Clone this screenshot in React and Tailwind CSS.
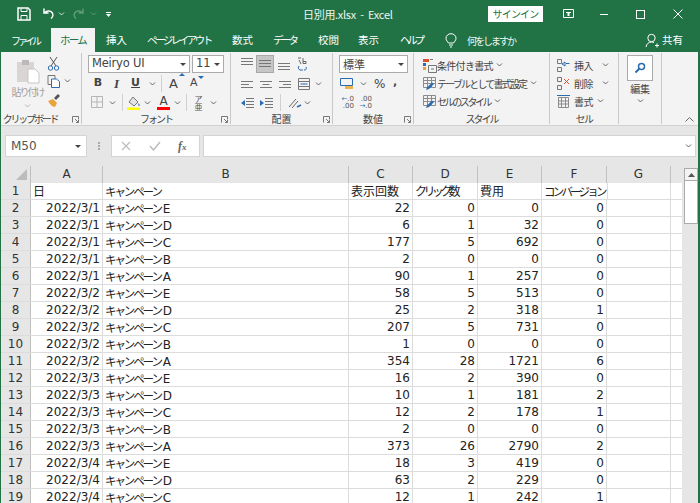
import React from "react";

const rows = [
  ["2022/3/1", "E", 22, 0, 0, 0],
  ["2022/3/1", "D", 6, 1, 32, 0],
  ["2022/3/1", "C", 177, 5, 692, 0],
  ["2022/3/1", "B", 2, 0, 0, 0],
  ["2022/3/1", "A", 90, 1, 257, 0],
  ["2022/3/2", "E", 58, 5, 513, 0],
  ["2022/3/2", "D", 25, 2, 318, 1],
  ["2022/3/2", "C", 207, 5, 731, 0],
  ["2022/3/2", "B", 1, 0, 0, 0],
  ["2022/3/2", "A", 354, 28, 1721, 6],
  ["2022/3/3", "E", 16, 2, 390, 0],
  ["2022/3/3", "D", 10, 1, 181, 2],
  ["2022/3/3", "C", 12, 2, 178, 1],
  ["2022/3/3", "B", 2, 0, 0, 0],
  ["2022/3/3", "A", 373, 26, 2790, 2],
  ["2022/3/4", "E", 18, 3, 419, 0],
  ["2022/3/4", "D", 63, 2, 229, 0],
  ["2022/3/4", "C", 12, 1, 242, 1],
];

const Ico = ({ w = 16, h = 16, className = "", children }) => (
  <svg width={w} height={h} viewBox={`0 0 ${w} ${h}`} fill="none" className={"shrink-0 " + className}>
    {children}
  </svg>
);

const Chev = ({ className = "w-[14px]", color = "#666" }) => (
  <span className={"flex justify-center shrink-0 " + className}>
    <svg width="7" height="4" viewBox="0 0 7 4" fill="none">
      <path d="M1 .5l2.5 2.5L6 .5" stroke={color} />
    </svg>
  </span>
);

const Caret = () => (
  <svg width="6" height="3" viewBox="0 0 6 3" className="shrink-0">
    <path d="M0 0h6L3 3z" fill="#444" />
  </svg>
);

const Launcher = () => (
  <svg width="7" height="7" viewBox="0 0 7 7" fill="none" className="absolute right-[2px] bottom-[1px]">
    <path d="M.5 6.5v-6h6v3M3 3l3.5 3.5M4 6.5h2.5V4" stroke="#777" />
  </svg>
);

const Lines = ({ y = [4, 7, 10], wide = [12, 12, 12], align = "left", color = "#777" }) => (
  <Ico w={14} h={14}>
    {y.map((v, i) => {
      const x = align === "left" ? 1 : align === "right" ? 13 - wide[i] : 7 - wide[i] / 2;
      return <path key={i} d={`M${x} ${v + 0.5}h${wide[i]}`} stroke={color} />;
    })}
  </Ico>
);

const Group = ({ w, label, launcher, labelClass = "", children }) => (
  <div className={"relative flex flex-col border-r border-[#c8c8c8] mt-[1px] mb-[1px] shrink-0 " + w}>
    <div className="flex-1 min-h-0">{children}</div>
    <div className={"h-[10px] leading-[10px] text-center text-[10px] text-[#444] whitespace-nowrap " + labelClass}>{label}</div>
    {launcher && <Launcher />}
  </div>
);

const Sep = ({ className = "" }) => <span className={"w-px h-[17px] bg-[#d0d0d0] shrink-0 " + className} />;

const Cell = ({ className = "", children }) => (
  <div className={"h-full shrink-0 border-r border-[#dcdcdc] px-[2px] overflow-visible whitespace-nowrap leading-[16px] " + className}>
    {children}
  </div>
);

const Kana = ({ children, className = "tracking-[-2.1px]" }) => (
  <span className={"font-['Noto_Sans_CJK_JP',sans-serif] text-[11.5px] " + className}>{children}</span>
);

const ColHead = ({ w, children }) => (
  <div className={"h-full shrink-0 border-r border-[#c0c0c0] text-center leading-[17px] text-[#333] " + w}>{children}</div>
);

const StyleRow = ({ icon, text, tracking }) => (
  <div className="flex items-center h-[18px] pl-[8px]">
    {icon}
    <span className={"text-[10px] text-[#444] whitespace-nowrap " + tracking}>{text}</span>
    <Chev className="w-[12px] ml-[1px]" />
  </div>
);

const CellRow = ({ icon, text, chevGap }) => (
  <div className="flex items-center h-[18px] pl-[7px]">
    {icon}
    <span className="ml-[4px] text-[10px] tracking-[-.5px] text-[#444] whitespace-nowrap">{text}</span>
    <Chev className={"w-[8px] " + chevGap} />
  </div>
);

const TableIcon = () => (
  <Ico w={15} h={15}>
    <path d="M1.5 1.5h12v10h-12zM1.5 4.5h12M1.5 7.5h12M5.5 1.5v10M9.5 1.5v10" stroke="#8b8b8b" />
    <path d="M4 14l3-1 5-5-2-1.5-5 5z" fill="#2b6cb0" />
  </Ico>
);

export default function App() {
  return (
    <div className="w-[700px] h-[503px] overflow-hidden bg-[#217346] flex flex-col font-['Noto_Sans_CJK_JP','DejaVu_Sans',sans-serif]">
      {/* title bar */}
      <div className="h-[28px] flex items-center text-white shrink-0">
        <div className="flex items-center pl-[17px] w-[488px] relative">
          <Ico w={14} h={14}>
            <path d="M1 1h10l2 2v10H1z" stroke="#fff" strokeWidth="1.5" />
            <path d="M4 1.5v3h6v-3M4 13V8.500h6V13" stroke="#fff" />
          </Ico>
          <Ico w={14} h={14} className="ml-[10px]">
            <path d="M3 1.500v4.500h4.500M3.500 6C5 3.800 9 3 11 5.500c1.500 2 1 4.500-1 6" stroke="#fff" strokeWidth="1.5" />
          </Ico>
          <Chev className="w-[11px] ml-[1px]" color="#cfe2d6" />
          <Ico w={14} h={14} className="ml-[5px]">
            <path d="M11 1.500v4.500H6.500M10.500 6C9 3.800 5 3 3 5.500c-1.500 2-1 4.500 1 6" stroke="#5e9a79" strokeWidth="1.5" />
          </Ico>
          <Chev className="w-[11px] ml-[2px]" color="#5e9a79" />
          <span className="ml-[5px] flex flex-col items-center gap-[1px] w-[8px]">
            <span className="w-[5px] h-px bg-white" />
            <svg width="5" height="3" viewBox="0 0 5 3"><path d="M0 0h5L2.500 3z" fill="#fff" /></svg>
          </span>
          <span className="ml-[191px] text-[11px] tracking-[-.3px] whitespace-pre text-[#eef5f0]">日別用.xlsx  -  Excel</span>
        </div>
        <div className="w-[55px] h-[16px] bg-white text-[#217346] text-[10px] leading-[16px] text-center tracking-[-.8px]">サインイン</div>
        <Ico w={12} h={10} className="ml-[20px]">
          <path d="M.5.500h10v8h-10z" stroke="#fff" />
          <path d="M3 3h5v1H6.500v3h-2V4H3z" fill="#fff" />
        </Ico>
        <span className="ml-[25px] w-[8px] h-px bg-white" />
        <span className="ml-[28px] w-[9px] h-[9px] border border-white" />
        <Ico w={10} h={10} className="ml-[28px]">
          <path d="M.5.500l9 9M9.500.500l-9 9" stroke="#fff" />
        </Ico>
      </div>

      {/* tabs */}
      <div className="h-[24px] flex items-center text-white text-[10.5px] shrink-0 whitespace-nowrap">
        <span className="ml-[11px] w-[40px] text-[10px] tracking-[-3px]">ファイル</span>
        <span className="w-[44px] h-full bg-[#f3f3f3] text-[#217346] flex items-center justify-center tracking-[-1.8px]">ホーム</span>
        <span className="ml-[11px] w-[41px]">挿入</span>
        <span className="w-[85px] tracking-[-2.5px]">ページ レイアウト</span>
        <span className="w-[41px]">数式</span>
        <span className="w-[45px] tracking-[-2.8px]">データ</span>
        <span className="w-[40px]">校閲</span>
        <span className="w-[42px]">表示</span>
        <span className="w-[44px] tracking-[-3.2px]">ヘルプ</span>
        <Ico w={12} h={15} className="ml-[1px]">
          <path d="M3.500 10C2.500 8.500 1 7.500 1 5.200a5 4.500 0 0 1 10 0C11 7.500 9.500 8.500 8.500 10zM4 12h4M5 14h2" stroke="#fff" />
        </Ico>
        <span className="ml-[10px] w-[178px] tracking-[-2px] text-[10px] text-[#eef5f0]">何をしますか</span>
        <Ico w={14} h={15}>
          <circle cx="6.500" cy="5" r="3.700" stroke="#fff" />
          <path d="M1 14c.5-3 2.500-5 5.500-5 1 0 2 .3 2.500.6M10 12.500h4M12 10.500v4" stroke="#fff" />
        </Ico>
        <span className="ml-[3px]">共有</span>
      </div>

      <div className="flex-1 min-h-0 ml-[1px] mr-[2px] bg-[#e6e6e6] flex flex-col">
        {/* ribbon */}
        <div className="h-[74px] shrink-0 bg-[#f3f3f3] border-b border-[#d2d2d2] flex">
          <Group w="w-[81px]" label="クリップボード" labelClass="pr-[22px] tracking-[-2.2px]" launcher>
            <div className="flex pl-[14px] pt-[5px]">
              <div className="w-[25px] flex flex-col items-center">
                <Ico w={24} h={26}>
                  <path d="M1 4h17v20H1z" fill="#d9d5d5" />
                  <path d="M6 2h7v5H6z" fill="#bdb8b8" />
                  <path d="M12 11h7l4 4v10H12z" fill="#fff" stroke="#c9c5c5" />
                </Ico>
                <span className="text-[10px] text-[#a0a0a0] whitespace-nowrap tracking-[-2px] leading-[14px] mt-[1px]">貼り付け</span>
                <Chev className="w-[10px] mt-[5px]" color="#b5b5b5" />
              </div>
              <div className="ml-[7px] -mt-[4px] flex flex-col">
                <div className="h-[18px] flex items-center">
                  <Ico w={13} h={15}>
                    <path d="M3 1l6 9M10 1L4 10" stroke="#555" />
                    <circle cx="3.500" cy="12" r="2.200" stroke="#2b6cb0" />
                    <circle cx="9.500" cy="12" r="2.200" stroke="#2b6cb0" />
                  </Ico>
                </div>
                <div className="h-[18px] flex items-center">
                  <Ico w={13} h={14}>
                    <path d="M1 1.500h7v9H1z" stroke="#777" />
                    <path d="M4.500 5h5l3 2.500v6h-8z" fill="#fff" stroke="#2b6cb0" />
                  </Ico>
                  <Chev className="w-[11px] ml-[2px]" />
                </div>
                <div className="h-[20px] flex items-center">
                  <Ico w={14} h={14}>
                    <path d="M1 8l5-2 4 4-2 4c-3 0-5-3-7-6z" fill="#e8a33d" />
                    <path d="M7 5l4-4 2 2-4 4z" fill="#555" />
                  </Ico>
                </div>
              </div>
            </div>
          </Group>

          <Group w="w-[149px]" label="フォント" labelClass="tracking-[-2px]" launcher>
            <div className="pl-[6px] pt-[2px] flex flex-col">
              <div className="flex h-[18px] gap-[2px]">
                <div className="w-[102px] bg-white border border-[#ababab] flex items-center justify-between px-[3px] font-['DejaVu_Sans',sans-serif] text-[11.5px] text-[#444] tracking-[-.2px]">
                  Meiryo UI
                  <Caret />
                </div>
                <div className="w-[32px] bg-white border border-[#ababab] flex items-center justify-between px-[3px] font-['DejaVu_Sans',sans-serif] text-[11.5px] text-[#444]">
                  11
                  <Caret />
                </div>
              </div>
              <div className="flex items-center h-[19px] mt-[1px] text-[#444]">
                <span className="w-[18px] text-center font-['DejaVu_Sans',sans-serif] font-bold text-[11px] ml-[1px]">B</span>
                <span className="w-[19px] text-center font-['Liberation_Serif',serif] italic font-bold text-[13px]">I</span>
                <span className="w-[19px] text-center font-['DejaVu_Sans',sans-serif] font-bold text-[11px] underline">U</span>
                <Chev className="w-[14px]" />
                <Sep className="ml-[2px]" />
                <span className="ml-[7px] w-[17px] font-['DejaVu_Sans',sans-serif] text-[13px] relative">
                  A
                  <span className="absolute -top-[1px] right-[1px] border-x-[3px] border-x-transparent border-b-[3px] border-b-[#2b6cb0]" />
                </span>
                <span className="ml-[4px] w-[14px] font-['DejaVu_Sans',sans-serif] text-[11px] relative">
                  A
                  <span className="absolute top-[1px] right-[0px] border-x-[3px] border-x-transparent border-t-[3px] border-t-[#2b6cb0]" />
                </span>
              </div>
              <div className="flex items-center h-[19px]">
                <Ico w={13} h={13} className="ml-[3px]">
                  <path d="M.5.500h11v11H.5zM6 .5v11M.5 6h11" stroke="#b5b5b5" />
                </Ico>
                <Chev className="w-[14px] ml-[1px]" />
                <Sep className="ml-[3px]" />
                <Ico w={15} h={15} className="ml-[3px]">
                  <path d="M7 2l5 5-4 4-5-4z" fill="#e3e3e3" stroke="#777" />
                  <path d="M12.500 8c1 1.500 1.500 2 1 3-1 .5-1.500-1-1-3z" fill="#2b6cb0" />
                  <path d="M1 12.500h13V15H1z" fill="#ffff00" />
                </Ico>
                <Chev className="w-[13px]" />
                <span className="ml-[2px] w-[15px] h-[15px] flex flex-col items-center justify-between font-['DejaVu_Sans',sans-serif] text-[12px] leading-[12px] text-[#444]">
                  A
                  <span className="w-[13px] h-[3px] bg-[#ff0000] shrink-0" />
                </span>
                <Chev className="w-[12px]" />
                <Sep className="ml-[3px]" />
                <span className="ml-[6px] w-[11px] text-[8px] leading-[8px] text-[#555] text-center">ア<br />亜</span>
                <Chev className="w-[14px] ml-[2px]" />
              </div>
            </div>
          </Group>

          <Group w="w-[102px]" label="配置" launcher>
            <div className="pl-[6px] pt-[2px] flex flex-col">
              <div className="flex items-center h-[18px]">
                <span className="w-[19px] flex justify-center -mt-[3px]"><Lines y={[2, 5, 8]} /></span>
                <span className="w-[18px] h-[18px] bg-[#c6c6c6] border border-[#a9a9a9] flex items-center justify-center"><Lines y={[3, 6, 9]} /></span>
                <span className="w-[20px] flex justify-center mt-[2px]"><Lines y={[5, 8, 11]} /></span>
                <Ico w={14} h={15} className="ml-[3px]">
                  <path d="M1 1h3M2 3l2 4" stroke="#666" />
                  <path d="M6 1v5.500M6 4.500h3v2H6" stroke="#666" />
                  <path d="M2 9c-1 1.500-1 3 1 4h3M9 10c1 2 0 3-2 3" stroke="#2b6cb0" />
                </Ico>
              </div>
              <div className="flex items-center h-[19px] mt-[1px]">
                <span className="w-[19px] flex justify-center"><Lines wide={[12, 8, 12]} /></span>
                <span className="w-[20px] flex justify-center"><Lines wide={[12, 7, 12]} align="center" /></span>
                <span className="w-[18px] flex justify-center"><Lines wide={[12, 8, 12]} align="right" /></span>
                <Ico w={14} h={14} className="ml-[3px]">
                  <path d="M1.500 1.500h11v11h-11zM1.500 4.500h11M1.500 9.500h11" stroke="#777" />
                  <path d="M3.500 7h7" stroke="#2b6cb0" />
                </Ico>
                <Chev className="w-[14px]" />
              </div>
              <div className="flex items-center h-[19px]">
                <span className="w-[19px] flex justify-center">
                  <Ico w={14} h={12}>
                    <path d="M6 1.500h8M6 4.500h8M6 7.500h8M6 10.500h8" stroke="#777" />
                    <path d="M1 6l4-3v6z" fill="#2b6cb0" />
                  </Ico>
                </span>
                <span className="w-[19px] flex justify-center">
                  <Ico w={14} h={12}>
                    <path d="M6 1.500h8M6 4.500h8M6 7.500h8M6 10.500h8" stroke="#777" />
                    <path d="M5 6L1 3v6z" fill="#2b6cb0" />
                  </Ico>
                </span>
                <Sep className="ml-[5px]" />
                <Ico w={15} h={14} className="ml-[6px]">
                  <path d="M2 11l7-8M5 12l6-7" stroke="#666" />
                  <path d="M10 11l4-2" stroke="#2b6cb0" strokeWidth="1.5" />
                </Ico>
                <Chev className="w-[10px]" />
              </div>
            </div>
          </Group>

          <Group w="w-[81px]" label="数値" launcher>
            <div className="pl-[6px] pt-[2px] flex flex-col">
              <div className="w-[69px] h-[18px] bg-white border border-[#ababab] flex items-center justify-between px-[3px] text-[11px] text-[#444]">
                標準
                <Caret />
              </div>
              <div className="flex items-center h-[19px] mt-[1px] pl-[1px]">
                <Ico w={14} h={13}>
                  <path d="M.5 1.500h12v7h-12z" stroke="#2b6cb0" />
                  <path d="M5 9h8v3H5z" fill="#f0b24a" />
                </Ico>
                <Chev className="w-[10px] ml-[4px]" />
                <span className="ml-[6px] w-[14px] font-['DejaVu_Sans',sans-serif] text-[12px] text-[#444]">%</span>
                <span className="ml-[5px] font-['DejaVu_Sans',sans-serif] font-bold text-[11px] text-[#444] leading-[8px] pb-[4px]">,</span>
              </div>
              <div className="flex items-center h-[19px] pl-[1px] gap-[4px]">
                <div className="w-[14px] font-['DejaVu_Sans',sans-serif] text-[7px] leading-[7px] text-[#555] text-right">
                  <span className="text-[#2b6cb0]">←</span>.0<br />.00
                </div>
                <div className="w-[14px] font-['DejaVu_Sans',sans-serif] text-[7px] leading-[7px] text-[#555] text-right">
                  .00<br /><span className="text-[#2b6cb0]">→</span>.0
                </div>
              </div>
            </div>
          </Group>

          <Group w="w-[136px]" label="スタイル" labelClass="tracking-[-2px]">
            <div className="pt-[3px] flex flex-col">
              <StyleRow
                tracking="tracking-[-.7px]"
                text="条件付き書式"
                icon={
                  <Ico w={15} h={15}>
                    <path d="M1 1h6v3H1z" fill="#d9542b" />
                    <path d="M1 5h3v3H1z" fill="#2b6cb0" />
                    <path d="M1 9h3v3H1z" fill="#e8a33d" />
                    <path d="M8 1.500h3M6.500 7.500h8v7h-8zM9 11h3" stroke="#777" />
                  </Ico>
                }
              />
              <StyleRow tracking="tracking-[-1.8px]" text="テーブルとして書式設定" icon={<TableIcon />} />
              <StyleRow tracking="tracking-[-2.4px]" text="セルのスタイル" icon={<TableIcon />} />
            </div>
          </Group>

          <Group w="w-[69px]" label="セル" labelClass="tracking-[-1.5px]">
            <div className="pt-[3px] flex flex-col">
              <CellRow
                text="挿入"
                chevGap="ml-[8px]"
                icon={
                  <Ico w={13} h={13}>
                    <path d="M.5.500h4v4h-4zM.5 8.500h4v4h-4z" stroke="#777" />
                    <path d="M5 5l3-2v4zM9 4.500h3.500" stroke="#2b6cb0" />
                  </Ico>
                }
              />
              <CellRow
                text="削除"
                chevGap="ml-[8px]"
                icon={
                  <Ico w={13} h={13}>
                    <path d="M.5.500h4v4h-4zM.5 8.500h4v4h-4z" stroke="#777" />
                    <path d="M7 2l5 5M12 2L7 7" stroke="#d9542b" />
                  </Ico>
                }
              />
              <CellRow
                text="書式"
                chevGap="ml-[3px]"
                icon={
                  <Ico w={13} h={13}>
                    <path d="M1.500 2.500h10v10h-10zM1.500 6h10M1.500 9h10M4.500 2.500v10M8.500 2.500v10" stroke="#8b8b8b" />
                    <path d="M0 .5h13" stroke="#2b6cb0" />
                  </Ico>
                }
              />
            </div>
          </Group>

          <Group w="w-[43px]" label="">
            <div className="flex flex-col items-center pt-[2px]">
              <div className="w-[26px] h-[26px] bg-white border border-[#ababab] flex items-center justify-center">
                <Ico w={12} h={12}>
                  <circle cx="7.500" cy="4.500" r="3" stroke="#2b6cb0" strokeWidth="1.5" />
                  <path d="M5.500 6.500L1.500 10.500" stroke="#2b6cb0" strokeWidth="2" />
                </Ico>
              </div>
              <span className="text-[10px] leading-[14px] text-[#444] mt-[1px] tracking-[-.3px]">編集</span>
              <Chev className="w-[10px] mt-[3px]" />
            </div>
          </Group>

          <div className="flex-1 flex items-end justify-end pr-[4px] pb-[3px]">
            <svg width="9" height="5" viewBox="0 0 9 5" fill="none"><path d="M.5 4.500l4-4 4 4" stroke="#666" /></svg>
          </div>
        </div>

        {/* formula bar */}
        <div className="h-[40px] shrink-0 flex items-start pt-[9px] pl-[4px] pr-[2px]">
          <div className="w-[82px] h-[22px] bg-white border border-[#d4d4d4] flex items-center justify-between pl-[5px] pr-[5px] font-['DejaVu_Sans',sans-serif] text-[12px] text-[#555]">
            M50
            <Caret />
          </div>
          <div className="w-[24px] h-[22px] flex flex-col items-center justify-center gap-[1px]">
            <span className="w-[2px] h-[2px] bg-[#aaa]" />
            <span className="w-[2px] h-[2px] bg-[#aaa]" />
            <span className="w-[2px] h-[2px] bg-[#aaa]" />
          </div>
          <div className="w-[89px] h-[22px] bg-white border border-[#d4d4d4] flex items-center pl-[9px]">
            <Ico w={10} h={10}>
              <path d="M1 1l8 8M9 1L1 9" stroke="#bdbdbd" strokeWidth="1.2" />
            </Ico>
            <Ico w={12} h={10} className="ml-[18px]">
              <path d="M1 5l3.500 4L11 1" stroke="#bdbdbd" strokeWidth="1.5" />
            </Ico>
            <span className="ml-[17px] font-['Liberation_Serif',serif] italic font-bold text-[12px] text-[#666]">
              f<span className="text-[9px]">x</span>
            </span>
          </div>
          <div className="ml-[3px] flex-1 h-[22px] bg-white border border-[#d4d4d4] flex items-center justify-end pr-[2px]">
            <Chev className="w-[10px]" />
          </div>
        </div>

        {/* sheet */}
        <div className="flex-1 min-h-0 flex font-['DejaVu_Sans','Noto_Sans_CJK_JP',sans-serif] text-[12px] text-[#222]">
          <div className="w-[681px] shrink-0 flex flex-col">
            <div className="h-[17px] shrink-0 flex">
              <div className="w-[30px] h-full shrink-0 border-r border-[#c0c0c0] flex items-center justify-end pr-[3px]">
                <svg width="11" height="11" viewBox="0 0 11 11"><path d="M11 0v11H0z" fill="#bcbcbc" /></svg>
              </div>
              <ColHead w="w-[72px]">A</ColHead>
              <ColHead w="w-[246px]">B</ColHead>
              <ColHead w="w-[64px]">C</ColHead>
              <ColHead w="w-[65px]">D</ColHead>
              <ColHead w="w-[64px]">E</ColHead>
              <ColHead w="w-[65px]">F</ColHead>
              <ColHead w="w-[64px]">G</ColHead>
            </div>
            <div className="flex-1 min-h-0 bg-white overflow-hidden">
              <div className="h-[17px] flex border-b border-[#dcdcdc]">
                <div className="w-[30px] h-full shrink-0 bg-[#e6e6e6] border-r border-[#c0c0c0] text-center leading-[16px] text-[#333]">1</div>
                <Cell className="w-[72px] font-['Noto_Sans_CJK_JP',sans-serif] text-[12px]">日</Cell>
                <Cell className="w-[246px]"><Kana>キャンペーン</Kana></Cell>
                <Cell className="w-[64px] font-['Noto_Sans_CJK_JP',sans-serif] text-[12px]">表示回数</Cell>
                <Cell className="w-[65px] font-['Noto_Sans_CJK_JP',sans-serif] text-[12px]">
                  <span className="tracking-[-3.6px]">クリック</span>数
                </Cell>
                <Cell className="w-[64px] font-['Noto_Sans_CJK_JP',sans-serif] text-[12px]">費用</Cell>
                <Cell className="w-[65px] border-r-0"><Kana className="tracking-[-2.8px]">コンバージョン</Kana></Cell>
                <Cell className="w-[64px] border-l border-[#dcdcdc]" />
              </div>
              {rows.map((r, i) => (
                <div key={i} className="h-[17px] flex border-b border-[#dcdcdc]">
                  <div className="w-[30px] h-full shrink-0 bg-[#e6e6e6] border-r border-[#c0c0c0] text-center leading-[16px] text-[#333]">{i + 2}</div>
                  <Cell className="w-[72px] text-right">{r[0]}</Cell>
                  <Cell className="w-[246px]"><Kana>キャンペーン</Kana><span className="ml-[2px]">{r[1]}</span></Cell>
                  <Cell className="w-[64px] text-right">{r[2]}</Cell>
                  <Cell className="w-[65px] text-right">{r[3]}</Cell>
                  <Cell className="w-[64px] text-right">{r[4]}</Cell>
                  <Cell className="w-[65px] text-right">{r[5]}</Cell>
                  <Cell className="w-[64px]" />
                </div>
              ))}
            </div>
          </div>
          {/* scrollbar */}
          <div className="ml-[2px] w-[14px] flex flex-col pt-[2px]">
            <div className="h-[13px] bg-[#f3f3f3] border border-[#ababab] flex items-center justify-center">
              <svg width="7" height="4" viewBox="0 0 7 4"><path d="M0 4l3.500-4L7 4z" fill="#555" /></svg>
            </div>
            <div className="h-[44px] bg-white border border-[#ababab] -mt-px" />
          </div>
        </div>
      </div>
    </div>
  );
}
